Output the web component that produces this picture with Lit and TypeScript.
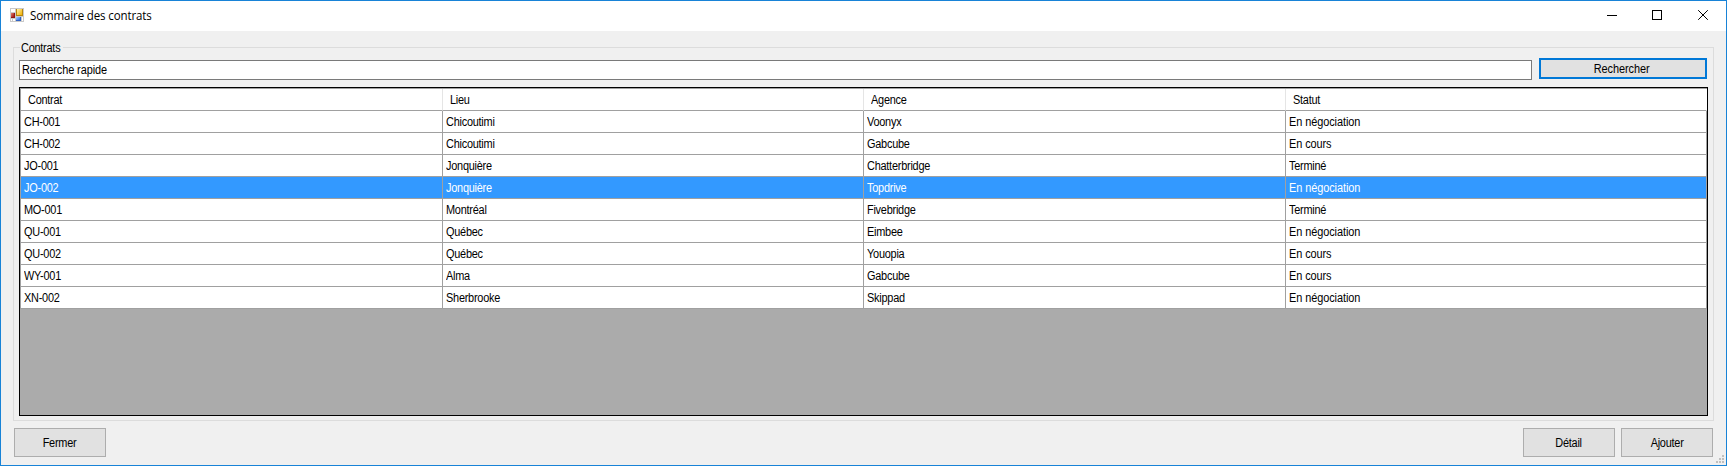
import { LitElement, html, svg, css } from "lit";
import { customElement, property } from "lit/decorators.js";
import { classMap } from "lit/directives/class-map.js";

const HEADERS = ["Contrat", "Lieu", "Agence", "Statut"];
const ROWS = [
  ["CH-001", "Chicoutimi", "Voonyx", "En négociation"],
  ["CH-002", "Chicoutimi", "Gabcube", "En cours"],
  ["JO-001", "Jonquière", "Chatterbridge", "Terminé"],
  ["JO-002", "Jonquière", "Topdrive", "En négociation"],
  ["MO-001", "Montréal", "Fivebridge", "Terminé"],
  ["QU-001", "Québec", "Eimbee", "En négociation"],
  ["QU-002", "Québec", "Youopia", "En cours"],
  ["WY-001", "Alma", "Gabcube", "En cours"],
  ["XN-002", "Sherbrooke", "Skippad", "En négociation"],
];

// Narrow rendering of the interface font, shared by every element.
const narrow = css`
  .t { display: inline-block; transform: scaleX(0.91); transform-origin: left center; letter-spacing: -0.26px; white-space: nowrap; }
  .loose { letter-spacing: -0.08px; }
`;

@customElement("title-bar")
class TitleBar extends LitElement {
  static styles = css`
    :host { display: flex; height: 30px; background: #fff; padding-left: 9px; box-sizing: border-box; }
    .icon { width: 14px; height: 14px; margin-top: 7px; flex: none; }
    .title { flex: 1; padding-left: 6px; font: 12px/30px "Open Sans", "Noto Sans", sans-serif; color: #000; white-space: nowrap; }
    .title span { display: inline-block; transform: scaleX(0.96); transform-origin: left center; letter-spacing: -0.14px; }
    .controls { display: flex; }
    .control { width: 45px; height: 29px; display: block; }
    .crisp { shape-rendering: crispEdges; }
  `;
  render() {
    return html`
      <svg class="icon" viewBox="0 0 14 14" shape-rendering="crispEdges">
        <defs>
          <linearGradient id="y" x1="0" y1="0" x2="1" y2="1"><stop offset="0" stop-color="#fff3b0" /><stop offset="1" stop-color="#f2b100" /></linearGradient>
          <linearGradient id="r" x1="0" y1="0" x2="1" y2="1"><stop offset="0" stop-color="#e08070" /><stop offset="1" stop-color="#a01010" /></linearGradient>
          <linearGradient id="b" x1="0" y1="0" x2="1" y2="1"><stop offset="0" stop-color="#a8ccff" /><stop offset="1" stop-color="#2f6fe0" /></linearGradient>
        </defs>
        <path d="M0 0H14V14H0Z" fill="#c9c9c9" />
        <path d="M1 1H5V4H1ZM1 11H2V13H1ZM3 11H5V13H3ZM12 9H13V13H12Z" fill="#fff" />
        <path d="M6 1H13V8H6Z" fill="#b8860b" /><path d="M7 1H12V7H7Z" fill="url(#y)" />
        <path d="M1 5H5V10H1Z" fill="#8e1414" /><path d="M1 5H4V9H1Z" fill="url(#r)" />
        <path d="M6 9H11V13H6Z" fill="#2f62c4" /><path d="M6 9H10V12H6Z" fill="url(#b)" />
      </svg>
      <div class="title"><span>Sommaire des contrats</span></div>
      <div class="controls">
        <svg class="control crisp" viewBox="0 0 45 29"><path d="M16 14H26V15H16Z" /></svg>
        <svg class="control crisp" viewBox="0 0 45 29"><path d="M16 9H26V19H16ZM17 10V18H25V10Z" fill-rule="evenodd" /></svg>
        <svg class="control" viewBox="0 0 45 29"><path d="M17.2 9.2L26.8 18.8M26.8 9.2L17.2 18.8" stroke="#000" /></svg>
      </div>
    `;
  }
}

@customElement("form-button")
class FormButton extends LitElement {
  @property() label = "";
  static styles = [
    narrow,
    css`
      :host { display: flex; align-items: center; justify-content: center; box-sizing: border-box; background: #e1e1e1; border: 1px solid #adadad; color: #000; }
      :host([primary]) { border: 2px solid #0078d7; }
      .t { transform-origin: center; }
      :host([primary]) .t { letter-spacing: -0.08px; margin-left: -2px; }
    `,
  ];
  render() {
    return html`<span class="t">${this.label}</span>`;
  }
}

@customElement("data-grid")
class DataGrid extends LitElement {
  static styles = [
    narrow,
    css`
      :host { display: block; box-sizing: border-box; border: 1px solid #000; background: #ababab; }
      .table { border-left: 1px solid #a0a0a0; border-top: 1px solid #a0a0a0; }
      .row { display: grid; grid-template-columns: 422px 421px 422px 421px; height: 22px; line-height: 21px; background: #fff; color: #000; }
      .selected { background: #3399ff; color: #fff; }
      .cell { box-sizing: border-box; height: 22px; overflow: hidden; border-right: 1px solid #a0a0a0; border-bottom: 1px solid #a0a0a0; padding: 1px 0 0 2.6px; white-space: nowrap; }
      .head .cell { padding-left: 7.4px; border-right-color: #e5e5e5; }
      .head .cell:last-child { border-right-color: #fff; }
    `,
  ];
  render() {
    return html`<div class="table">
      <div class="row head">${HEADERS.map((h) => html`<div class="cell"><span class="t">${h}</span></div>`)}</div>
      ${ROWS.map(
        (r, i) => html`<div class=${classMap({ row: true, selected: i === 3 })}>
          ${r.map(
            (c) => html`<div class="cell"><span class=${classMap({ t: true, loose: c.includes(" ") })}>${c}</span></div>`
          )}
        </div>`
      )}
    </div>`;
  }
}

@customElement("app-root")
class AppRoot extends LitElement {
  static styles = [
    narrow,
    css`
      :host { display: flex; flex-direction: column; box-sizing: border-box; width: 1727px; height: 466px; border: 1px solid #1883d7; background: #f0f0f0; font: 12px/14px "Liberation Sans", Arial, sans-serif; color: #000; overflow: hidden; }
      .group { box-sizing: border-box; width: 1701px; height: 374px; margin: 16px 0 0 12px; border: 1px solid #dcdcdc; padding: 0 5px; }
      .legend { display: block; width: 43px; height: 14px; margin: -7px 0 0 1px; padding-left: 1px; box-sizing: border-box; background: #f0f0f0; line-height: 14px; }
      .search { display: flex; justify-content: space-between; margin-top: 3px; }
      .field { box-sizing: border-box; width: 1513px; height: 20px; margin-top: 2px; border: 1px solid #7a7a7a; background: #fff; padding-left: 2px; line-height: 18px; }
      .find { width: 168px; height: 21px; margin-right: 1px; }
      .grid { height: 329px; margin-top: 7px; }
      .footer { display: flex; gap: 6px; margin: 7px 0 0 13px; width: 1699px; }
      .footer form-button { width: 92px; height: 29px; }
      .spacer { flex: 1; }
      .grip { position: absolute; left: 1716px; top: 455px; width: 8px; height: 8px; }
    `,
  ];
  render() {
    return html`
      <title-bar></title-bar>
      <div class="group">
        <span class="legend"><span class="t">Contrats</span></span>
        <div class="search">
          <div class="field"><span class="t loose">Recherche rapide</span></div>
          <form-button class="find" primary label="Rechercher"></form-button>
        </div>
        <data-grid class="grid"></data-grid>
      </div>
      <div class="footer">
        <form-button label="Fermer"></form-button>
        <div class="spacer"></div>
        <form-button label="Détail"></form-button>
        <form-button label="Ajouter"></form-button>
      </div>
      <svg class="grip" viewBox="0 0 8 8" fill="#bfbfbf" shape-rendering="crispEdges">
        <path d="M6 0h2v2h-2zM3 3h2v2h-2zM6 3h2v2h-2zM0 6h2v2h-2zM3 6h2v2h-2zM6 6h2v2h-2z" />
      </svg>
    `;
  }
}
